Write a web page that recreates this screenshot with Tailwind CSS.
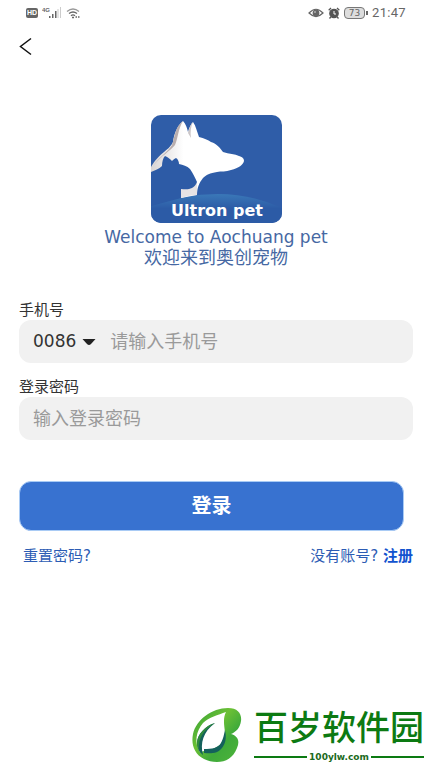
<!DOCTYPE html>
<html lang="zh-CN">
<head>
  <meta charset="UTF-8">
  <meta name="viewport" content="width=device-width, initial-scale=1.0">
  <title>Ultron pet - 登录</title>
  <script src="https://cdn.jsdelivr.net/npm/@tailwindcss/browser@4"></script>
</head>
<body class="bg-white min-h-screen flex flex-col font-['DejaVu_Sans','Noto_Sans_CJK_SC',sans-serif]">

  <!-- Status bar -->
  <header class="flex items-center justify-between h-[25px] px-[26px] text-[#666]">
    <div class="flex items-center">
      <span class="w-3 h-2.5 rounded-xs bg-[#666] text-white text-[7px] leading-[10px] text-center font-bold font-['Liberation_Sans',sans-serif]">HD</span>
      <svg class="w-5 h-3 ml-1" viewBox="0 0 20 12" fill="#666">
        <text x="0" y="5" font-size="6" font-weight="bold" font-family="Liberation Sans">4G</text>
        <rect x="7" y="9" width="1.5" height="2"/>
        <rect x="10" y="7" width="1.5" height="4"/>
        <rect x="13" y="4" width="1.5" height="7"/>
        <rect x="15.5" y="2" width="1" height="9" fill="#ccc"/>
        <rect x="18" y="0" width="1" height="11" fill="#ccc"/>
      </svg>
      <svg class="w-4 h-3 ml-1" viewBox="0 0 16 12" fill="none" stroke="#666" stroke-width="1.3">
        <path d="M1 4.5Q7 -.5 13 4.5" stroke="#999"/>
        <path d="M3 6.5Q7 3.5 11 6.5"/>
        <path d="M5 8.8Q7 7 9 8.8"/>
        <path d="M6 10.5h2M9.5 10H11M12 10h1.5" stroke-width="1.6"/>
      </svg>
    </div>
    <div class="flex items-center">
      <svg class="w-4 h-3 -ml-1 mr-1" viewBox="0 0 16 12" fill="none" stroke="#666" stroke-width="1.2">
        <path d="M1 6Q8 -1.5 15 6Q8 13 1 6Z"/>
        <circle cx="8" cy="6" r="2.8" fill="#666"/>
        <circle cx="7" cy="5" r=".7" fill="#fff" stroke="none"/>
      </svg>
      <svg class="w-3 h-3" viewBox="0 0 12 12" fill="none" stroke="#555" stroke-width="1.3">
        <circle cx="6" cy="6.5" r="4.2" fill="#555"/>
        <path d="M.7 3.2L3 1M11.3 3.2L9 1M2.8 10L1.5 11.5M9.2 10L10.5 11.5"/>
        <path d="M6 4v3h2" stroke="#fff" stroke-width="1"/>
      </svg>
      <span class="w-[21px] h-3 ml-1 rounded-sm border border-[#777] bg-[#ddd] text-[9px] leading-[10px] text-center">73</span>
      <span class="w-0.5 h-1 ml-px bg-[#666]"></span>
      <span class="ml-1 text-[13px] leading-6 font-[Roboto,sans-serif] tracking-wide">21:47</span>
    </div>
  </header>

  <nav class="px-4 pt-[7px]">
    <button type="button" aria-label="返回" class="block w-5 h-8">
      <svg class="w-5 h-8" viewBox="0 0 20 32" fill="none" stroke="#111" stroke-width="1.5">
        <path d="M15 6.500L4.500 14.500L15 22.500"/>
      </svg>
    </button>
  </nav>

  <main class="flex-1 px-[19px] pt-[51px]">
    <div class="flex flex-col items-center text-[#4668a3]">
      <svg class="w-[131px] h-[108px]" viewBox="0 0 131 108" role="img" aria-label="Ultron pet">
        <defs>
          <linearGradient id="hill" x1="0" y1="0" x2="0" y2="1">
            <stop offset="0" stop-color="#3a78b8"/>
            <stop offset=".5" stop-color="#2c5ba6"/>
          </linearGradient>
          <linearGradient id="fur" x1="0" y1="0" x2="1" y2="0">
            <stop offset="0" stop-color="#d8d4d4"/>
            <stop offset=".35" stop-color="#fff"/>
          </linearGradient>
          <clipPath id="card"><rect width="131" height="108" rx="10"/></clipPath>
        </defs>
        <g clip-path="url(#card)">
          <rect width="131" height="108" fill="#2f5da8"/>
          <path d="M0 108V91Q32 79 67 79Q101 79 131 93V108Z" fill="url(#hill)"/>
          <path d="M0 52C4 45 8 41 13 37C18 33 20 31 22 27C23 18 27 10 32 6C35 9 36 13 37 17C38 13 40 9 42 7C45 11 46 17 48 22C53 23 57 25 60 27C66 29 69 33 72 37C78 39 84 39 88 41C92 42 93 44 93 46C92 50 88 53 80 55C75 57 70 56 66 57C59 58 55 60 52 63C48 68 46 73 46 80L30 83V74L20 60L0 60Z" fill="url(#fur)"/>
          <path d="M32 6C27 14 27 23 24 30C19 36 10 41 3 50C7 43 17 37 21 30C24 21 24 12 32 6Z" fill="#b9aeae"/>
          <path d="M42 7C40 11 39 17 40 23L37 18C38 13 40 9 42 7Z" fill="#cbc6c8"/>
          <path d="M30 74L42 72L46 67V80Q38 80 30 83Z" fill="#e6e3e4"/>
          <path d="M0 57C4 55 8 54 11 51C11 47 12 43 14 41C17 42 19 44 21 46C22 45 23 44 25 43C27 44 28 47 28 49C32 50 36 51 39 54C42 58 44 63 46 67C45 70 43 72 41 73C37 75 33 74 30 74V83L0 91Z" fill="#2d5ba6"/>
        </g>
        <text x="66" y="101" text-anchor="middle" fill="#fff" font-family="DejaVu Sans" font-weight="bold" font-size="16">Ultron pet</text>
      </svg>
      <p class="mt-1 text-[17px] leading-5">Welcome to Aochuang pet</p>
      <p class="text-lg leading-[22px]">欢迎来到奥创宠物</p>
    </div>

    <form class="mt-8">
      <label for="phone" class="block text-[15px] leading-[18px] text-[#333]">手机号</label>
      <div class="flex items-center h-[43px] mt-px rounded-xl bg-[#f1f1f1]">
        <button type="button" class="flex items-center pl-3.5 text-[17px] text-[#333]">
          0086
          <svg class="w-3.5 h-2 ml-1.5" viewBox="0 0 14 8" fill="#222"><path d="M.5 1H13.500L9 6Q7 8 5 6Z"/></svg>
        </button>
        <input id="phone" type="tel" placeholder="请输入手机号" class="flex-1 min-w-0 h-full ml-3.5 text-lg placeholder-[#9a9a9a] outline-none">
      </div>

      <label for="password" class="block mt-[15px] text-[15px] leading-[18px] text-[#333]">登录密码</label>
      <input id="password" type="password" placeholder="输入登录密码" class="block w-full h-[43px] mt-px px-3.5 rounded-xl bg-[#f1f1f1] text-lg placeholder-[#9a9a9a] outline-none">

      <div class="pr-[9px]">
        <button type="submit" class="w-full h-[50px] mt-[41px] rounded-xl border border-[#a9cbf5] bg-[#3872d0] text-white text-xl font-bold">登录</button>
      </div>
    </form>

    <div class="flex justify-between mt-[15px] pl-1 text-[15px] leading-5 text-[#2c5cb4]">
      <a href="#">重置密码?</a>
      <p>没有账号? <a href="#" class="font-bold text-[#1253cf]">注册</a></p>
    </div>
  </main>

  <!-- Site mark -->
  <footer class="flex justify-end items-end pr-2 pb-[5px] text-[#0c7a12]">
    <svg class="w-[50px] h-[55px]" viewBox="0 0 50 55">
      <defs>
        <linearGradient id="leaf" x1="0" y1="0" x2="1" y2="1">
          <stop offset="0" stop-color="#2f9e35"/>
          <stop offset=".4" stop-color="#6cc035"/>
          <stop offset=".65" stop-color="#3faa3a"/>
          <stop offset="1" stop-color="#4fb53a"/>
        </linearGradient>
      </defs>
      <path d="M12 51C2 46 -1 36 1 26C4 12 20 0 36 0C46 0 50 6 49 13C48 20 44 24 39 26C46 28 48 33 45 40C41 50 34 54 25 54C20 54 16 53 12 51Z" fill="url(#leaf)"/>
      <path d="M34 4C31 10 32 16 33 24C32 35 27 41 12 43L8 44C2 35 4 23 11 15C17 9 26 7 34 4Z" fill="#fff"/>
      <path d="M23 15C13 18 6 26 5 34C5 40 7 44 11 47C8 35 11 24 23 15Z" fill="#14615c"/>
      <path d="M23 15C13 18 6 26 5 34C5 37 5 39 7 42C6 31 11 22 23 15Z" fill="#2f8a3c"/>
      <path d="M33 22C35 31 33 36 30 40C26 45 20 46 12 45L12 41C20 41 26 40 29 35C31 31 32 27 33 22Z" fill="#14615c"/>
    </svg>
    <div class="ml-3">
      <p class="text-[34px] leading-[50px] font-medium font-['Noto_Sans_CJK_SC',sans-serif]">百岁软件园</p>
      <div class="flex items-center gap-0.5">
        <span class="flex-1 h-0.5 bg-[#0c7a12]"></span>
        <span class="text-[9px] leading-3 font-bold text-[#1b6a20]">100ylw.com</span>
        <span class="flex-1 h-0.5 bg-[#0c7a12]"></span>
      </div>
    </div>
  </footer>

</body>
</html>
